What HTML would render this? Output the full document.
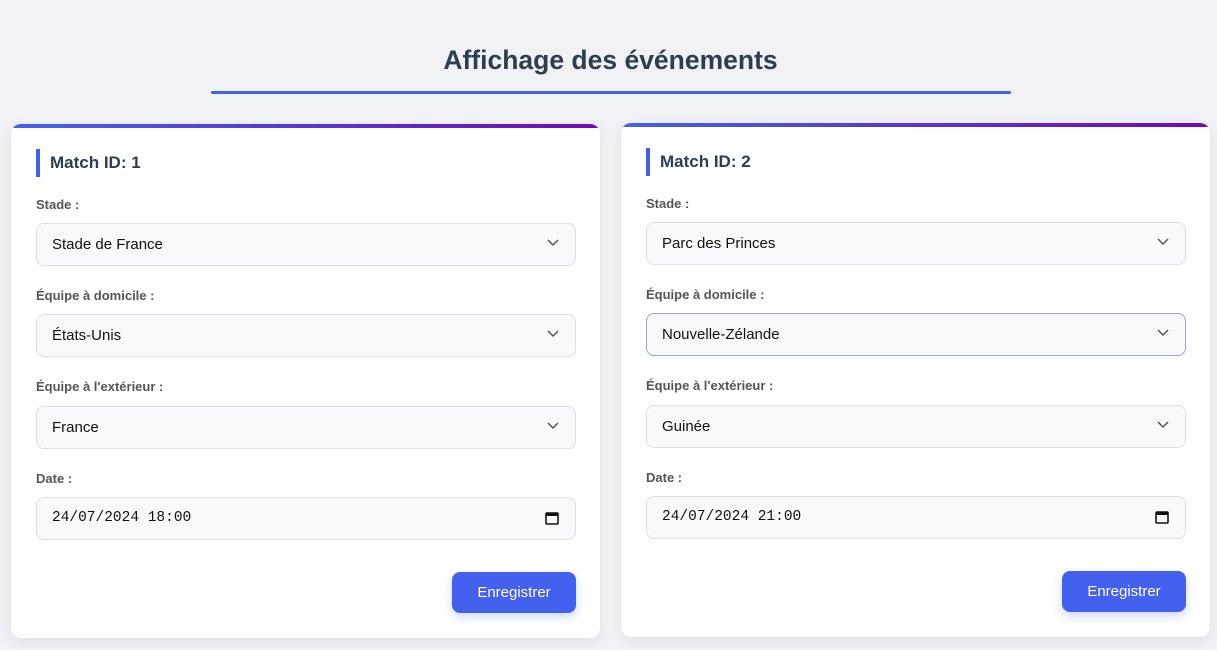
<!DOCTYPE html>
<html><head><meta charset="utf-8"><style>
*{box-sizing:border-box;margin:0;padding:0}
body{width:1217px;height:650px;background:#f0f2f5;font-family:"Liberation Sans",sans-serif;overflow:hidden;position:relative}
h1{position:absolute;top:45px;left:0;width:1221px;text-align:center;font-size:26.5px;font-weight:bold;color:#2c3e50}
.ul{position:absolute;left:211px;top:91px;width:800px;height:3px;background:#4361ee;border-radius:2px}
.card{position:absolute;width:589px;height:514px;background:#fff;border-radius:10px;box-shadow:0 4px 14px rgba(0,0,0,.08);overflow:hidden}
.card:before{content:"";position:absolute;left:0;top:0;right:0;height:4px;background:linear-gradient(90deg,#4361ee,#7209b7)}
.hd{position:absolute;left:25px;top:25px;height:28px;border-left:4px solid #4361ee;padding-left:10px;font-size:17px;font-weight:bold;color:#2c3e50;line-height:28px}
.lb{position:absolute;left:25px;font-size:13px;font-weight:bold;color:#555}
.f{position:absolute;left:25px;width:540px;height:43px;background:#f8f9fa;border:1px solid #dcdfe4;border-radius:8px;font-size:15px;color:#111;padding-left:15px;line-height:41px}
.f svg{position:absolute;right:16px;top:15px}
.f.foc{border-color:#9aa6c8}
.dt{font-family:"Liberation Mono",monospace;font-size:14.5px}
.btn{position:absolute;left:441px;top:448px;width:124px;height:41px;background:#4361ee;color:#fff;border-radius:8px;font-size:15px;text-align:center;line-height:41px;box-shadow:0 4px 10px rgba(67,97,238,.25)}
</style></head><body>
<h1>Affichage des événements</h1><div class="ul"></div>
<div class="card" style="left:11px;top:124px">
<div class="hd">Match ID: 1</div>
<div class="lb" style="top:73px">Stade :</div>
<div class="f" style="top:99px">Stade de France<svg width="12" height="8" viewBox="0 0 12 8"><path d="M1 1l5 5 5-5" fill="none" stroke="#555" stroke-width="1.5"/></svg></div>
<div class="lb" style="top:164px">Équipe à domicile :</div>
<div class="f" style="top:190px">États-Unis<svg width="12" height="8" viewBox="0 0 12 8"><path d="M1 1l5 5 5-5" fill="none" stroke="#555" stroke-width="1.5"/></svg></div>
<div class="lb" style="top:255px">Équipe à l'extérieur :</div>
<div class="f" style="top:282px">France<svg width="12" height="8" viewBox="0 0 12 8"><path d="M1 1l5 5 5-5" fill="none" stroke="#555" stroke-width="1.5"/></svg></div>
<div class="lb" style="top:347px">Date :</div>
<div class="f dt" style="top:373px">24/07/2024 18:00<svg width="14" height="14" viewBox="0 0 14 14" style="top:13px;right:16px"><rect x="1" y="2" width="12" height="11" rx="1" fill="none" stroke="#111" stroke-width="1.6"/><rect x="1" y="2" width="12" height="3" fill="#111"/></svg></div>
<div class="btn">Enregistrer</div>
</div>
<div class="card" style="left:621px;top:123px">
<div class="hd">Match ID: 2</div>
<div class="lb" style="top:73px">Stade :</div>
<div class="f" style="top:99px">Parc des Princes<svg width="12" height="8" viewBox="0 0 12 8"><path d="M1 1l5 5 5-5" fill="none" stroke="#555" stroke-width="1.5"/></svg></div>
<div class="lb" style="top:164px">Équipe à domicile :</div>
<div class="f foc" style="top:190px">Nouvelle-Zélande<svg width="12" height="8" viewBox="0 0 12 8"><path d="M1 1l5 5 5-5" fill="none" stroke="#555" stroke-width="1.5"/></svg></div>
<div class="lb" style="top:255px">Équipe à l'extérieur :</div>
<div class="f" style="top:282px">Guinée<svg width="12" height="8" viewBox="0 0 12 8"><path d="M1 1l5 5 5-5" fill="none" stroke="#555" stroke-width="1.5"/></svg></div>
<div class="lb" style="top:347px">Date :</div>
<div class="f dt" style="top:373px">24/07/2024 21:00<svg width="14" height="14" viewBox="0 0 14 14" style="top:13px;right:16px"><rect x="1" y="2" width="12" height="11" rx="1" fill="none" stroke="#111" stroke-width="1.6"/><rect x="1" y="2" width="12" height="3" fill="#111"/></svg></div>
<div class="btn">Enregistrer</div>
</div>
</body></html>
